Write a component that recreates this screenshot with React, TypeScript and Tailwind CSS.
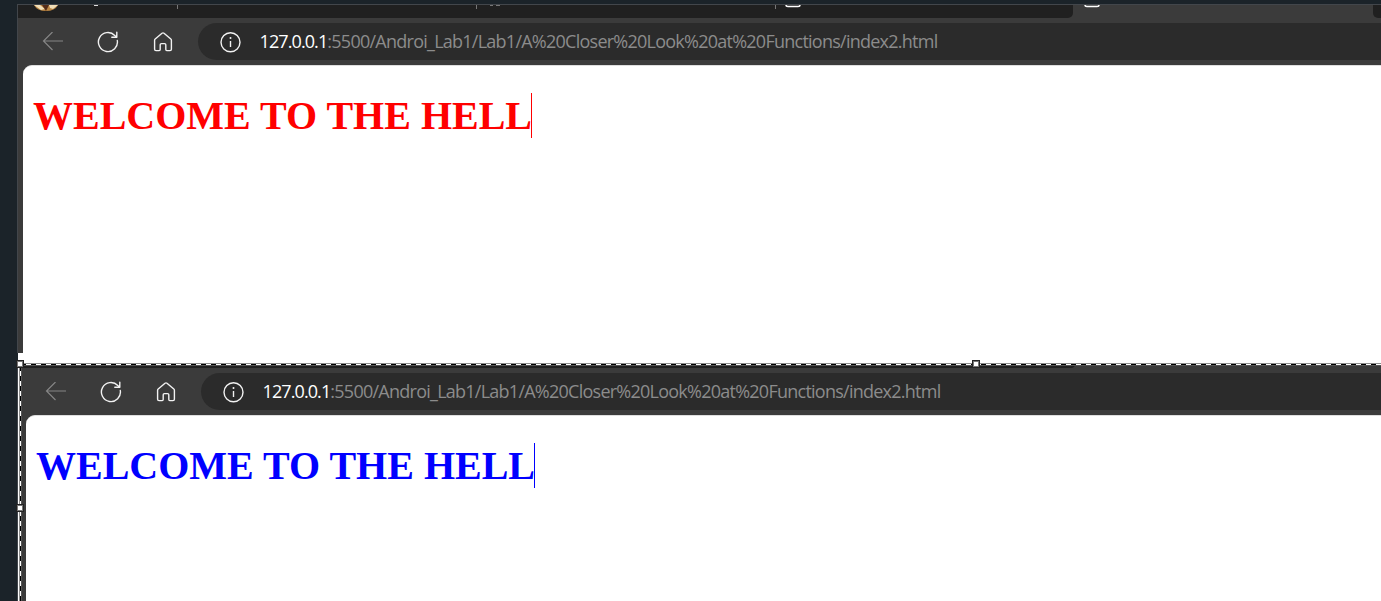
function BackIcon() {
  return (
    <svg className="block" width="22" height="20" viewBox="0 0 22 20" fill="none" stroke="#858585" strokeWidth="1.2">
      <path d="M21 9H1.500M10.500 0L1.500 9l9 9" />
    </svg>
  );
}

function ReloadIcon() {
  return (
    <svg className="block" width="22" height="22" viewBox="0 0 22 22" fill="none" stroke="#f2f2f2" strokeWidth="1.4" strokeLinecap="round" strokeLinejoin="round">
      <path d="M20.300 9.500A9.500 9.500 0 1 1 17.800 4.500L19.800 6M19.800 1.300V6.200H14.800" />
    </svg>
  );
}

function HomeIcon() {
  return (
    <svg className="block" width="20" height="20" viewBox="0 0 20 20" fill="none" stroke="#f2f2f2" strokeWidth="1.4" strokeLinejoin="round">
      <path d="M1.600 8.200Q1.600 7.500 2.200 7L9 1.200Q10 .5 11 1.200L17.800 7Q18.400 7.500 18.400 8.200V17.200Q18.400 18.600 17 18.600H13.800Q12.800 18.600 12.800 17.600V12.800Q12.800 11.600 11.600 11.600H8.400Q7.200 11.600 7.200 12.800V17.600Q7.200 18.600 6.200 18.600H3Q1.600 18.600 1.600 17.200Z" />
    </svg>
  );
}

function InfoIcon() {
  return (
    <svg className="block shrink-0" width="22" height="22" viewBox="0 0 22 22" fill="none" stroke="#f2f2f2" strokeWidth="1.4">
      <circle cx="11.500" cy="11.300" r="9.500" />
      <path d="M11.500 10V16" />
      <circle cx="11.500" cy="7.100" r="1" fill="#f2f2f2" stroke="none" />
    </svg>
  );
}

function Toolbar() {
  return (
    <div className="flex h-[47px] items-start bg-[#3b3b3b] pt-[5px]">
      <div className="flex h-[37px] w-[180px] shrink-0 items-center">
        <div className="ml-6 w-[22px]"><BackIcon /></div>
        <div className="ml-[33px] w-[22px]"><ReloadIcon /></div>
        <div className="ml-[34px] w-5"><HomeIcon /></div>
      </div>
      <div className="flex h-[37px] flex-1 items-center rounded-l-full bg-[#2b2b2b] pl-[21px]">
        <InfoIcon />
        <div className="ml-[18.500px] whitespace-nowrap font-['Open_Sans','Noto_Sans',sans-serif] text-[18px] leading-[37px] text-[#8c8c8c]">
          <span className="tracking-[-0.9px] text-white">127.0.0.1</span>
          <span className="tracking-[-0.75px]">:5500/Androi_Lab1/Lab1/A%20Closer%20Look%20at%20Functions/index2.html</span>
        </div>
      </div>
    </div>
  );
}

function Page({ tone }: { tone: string }) {
  return (
    <div className="flex min-h-0 flex-1 bg-[#3b3b3b] pl-[5px]">
      <div className="flex-1 rounded-tl-[9px] border-t border-[#dedede] bg-white pt-[27px] pl-[10px]">
        <div className="flex h-[45px]">
          <h1 className={`w-[499px] whitespace-nowrap border-r font-['Liberation_Serif',serif] text-[40px] font-bold leading-[45px] ${tone}`}>
            WELCOME TO THE HELL
          </h1>
        </div>
      </div>
    </div>
  );
}

function TabStrip() {
  return (
    <div className="flex h-[13px] items-start overflow-hidden bg-[#3b3b3b]">
      <div className="flex h-[13px] w-[1055px] shrink-0 items-start rounded-br-[5px] bg-[#202020]">
        <svg className="block" width="1055" height="13" viewBox="0 0 1055 13">
          <path d="M16 0h24q-3 6-12 6T16 0Z" fill="#b98543" />
          <path d="M16 0h6l5 4-4 1zM31 0h9l-5 4-3-1z" fill="#f1dfb8" />
          <path d="M24 0h7l-3 6z" fill="#532c18" />
          <path d="M76 .5h4" stroke="#ddd" fill="none" />
          <path d="M472 .5h3M478 .5h4" stroke="#777" fill="none" />
          <path d="M159.500 0v4M458.500 0v4M757.500 0v4" stroke="#777" />
          <path d="M768 0q0 1.500 2 1.500h10q2 0 2-1.500" stroke="#fff" strokeWidth="1.400" fill="none" />
        </svg>
      </div>
      <svg className="block" width="300" height="13" viewBox="0 0 300 13">
        <path d="M12 0q0 1.500 2 1.500h10q2 0 2-1.500" stroke="#fff" strokeWidth="1.400" fill="none" />
      </svg>
      <div className="h-[13px] w-[8px] rounded-bl-[5px] bg-[#202020]" />
    </div>
  );
}

function Handle({ x, y }: { x: number; y: number }) {
  return (
    <g>
      <rect x={x} y={y} width="8" height="8" fill="#222" />
      <rect x={x + 1} y={y + 1} width="6" height="6" fill="#777" />
      <rect x={x + 2} y={y + 2} width="4" height="4" fill="#fff" />
    </g>
  );
}

export default function App() {
  return (
    <main className="relative flex h-[601px] w-[1381px] flex-col overflow-hidden bg-[#1b2329]">
      <section className="ml-[17px] mt-1 flex h-[349px] shrink-0 flex-col border-l border-t border-[#42464b]">
        <TabStrip />
        <Toolbar />
        <Page tone="border-[#ff0000] text-[#ff0000]" />
      </section>
      <div className="ml-[18px] h-[10px] shrink-0 bg-white" />
      <section className="ml-[17px] flex min-h-0 flex-1 border-l border-[#42464b]">
        <div className="w-[3px] shrink-0 bg-white" />
        <div className="flex min-w-0 flex-1 flex-col">
          <div className="flex h-[5px] shrink-0 bg-[#3b3b3b]">
            <div className="w-[1054px] shrink-0 rounded-br-[4px] bg-[#202020]" />
          </div>
          <Toolbar />
          <Page tone="border-[#0000ff] text-[#0000ff]" />
        </div>
      </section>
      <svg className="pointer-events-none absolute left-0 top-0" width="1381" height="601" viewBox="0 0 1381 601" shapeRendering="crispEdges">
        <path d="M18 363.500H1381M19.500 364V601" stroke="#8e8e8e" />
        <path d="M20 365.500H1381M21.500 366V601" stroke="#555" />
        <path d="M18 364.500H1381M20.500 364V601" stroke="#fff" />
        <path d="M21 364.500H1381M20.500 366V601" stroke="#000" strokeDasharray="5 5" />
        <Handle x={16} y={360} />
        <Handle x={972} y={360} />
        <Handle x={16} y={504} />
      </svg>
    </main>
  );
}
